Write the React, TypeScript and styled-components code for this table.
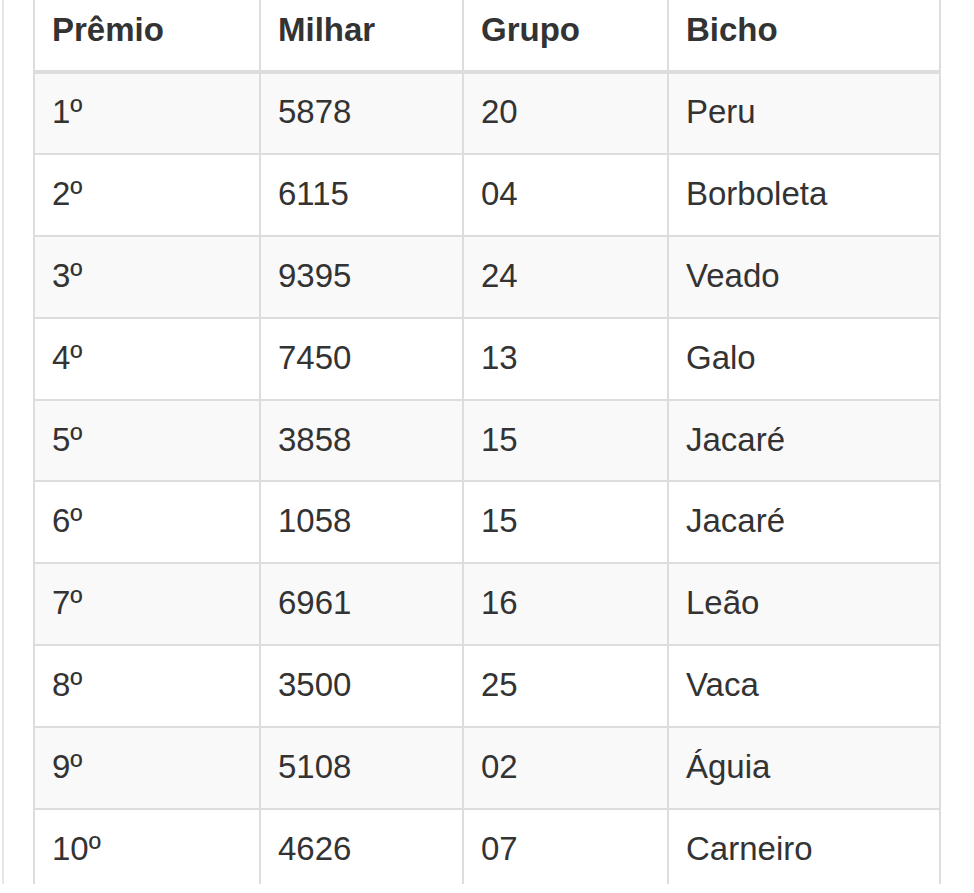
import styled, { createGlobalStyle } from 'styled-components';

interface ResultRow {
  premio: string;
  milhar: string;
  grupo: string;
  bicho: string;
}

const results: ResultRow[] = [
  { premio: '1º', milhar: '5878', grupo: '20', bicho: 'Peru' },
  { premio: '2º', milhar: '6115', grupo: '04', bicho: 'Borboleta' },
  { premio: '3º', milhar: '9395', grupo: '24', bicho: 'Veado' },
  { premio: '4º', milhar: '7450', grupo: '13', bicho: 'Galo' },
  { premio: '5º', milhar: '3858', grupo: '15', bicho: 'Jacaré' },
  { premio: '6º', milhar: '1058', grupo: '15', bicho: 'Jacaré' },
  { premio: '7º', milhar: '6961', grupo: '16', bicho: 'Leão' },
  { premio: '8º', milhar: '3500', grupo: '25', bicho: 'Vaca' },
  { premio: '9º', milhar: '5108', grupo: '02', bicho: 'Águia' },
  { premio: '10º', milhar: '4626', grupo: '07', bicho: 'Carneiro' },
];

const GlobalStyle = createGlobalStyle`
  html, body {
    margin: 0;
    padding: 0;
    background: #fff;
    overflow: hidden;
  }
  body {
    font-family: "Liberation Sans", Arial, sans-serif;
    color: #333;
  }
`;

export default function App() {
  return (
    <>
      <GlobalStyle />
      <Page>
        <ResultTable>
          <colgroup>
            <col style={{ width: 226 }} />
            <col style={{ width: 203 }} />
            <col style={{ width: 205 }} />
            <col />
          </colgroup>
          <thead>
            <tr>
              <HeadCell>Prêmio</HeadCell>
              <HeadCell>Milhar</HeadCell>
              <HeadCell>Grupo</HeadCell>
              <HeadCell>Bicho</HeadCell>
            </tr>
          </thead>
          <tbody>
            {results.map((row, index) => (
              <Row key={row.premio} $striped={index % 2 === 0}>
                <Cell>{row.premio}</Cell>
                <Cell>{row.milhar}</Cell>
                <Cell>{row.grupo}</Cell>
                <Cell>{row.bicho}</Cell>
              </Row>
            ))}
          </tbody>
        </ResultTable>
      </Page>
    </>
  );
}

const Page = styled.main`
  margin-left: 2px;
  border-left: 2px solid #e6e6e6;
  padding-left: 29px;
  width: 908px;
  height: 893px;
`;

const ResultTable = styled.table`
  margin-top: -9px;
  width: 908px;
  border-collapse: collapse;
  border: 2px solid #ddd;
  table-layout: fixed;
  font-family: "Liberation Sans", Arial, sans-serif;
  font-size: 33px;
  line-height: 46px;
`;

const HeadCell = styled.th`
  height: 80px;
  padding: 0 17px 4px;
  border: 2px solid #ddd;
  border-bottom: 4px solid #ddd;
  text-align: left;
  font-weight: 700;
  color: #333;
  box-sizing: border-box;
`;

const Row = styled.tr<{ $striped: boolean }>`
  background: ${({ $striped }) => ($striped ? '#f9f9f9' : '#fff')};
`;

const Cell = styled.td`
  height: 81.9px;
  padding: 0 17px 2px;
  border: 2px solid #ddd;
  color: #333;
  box-sizing: border-box;
`;
